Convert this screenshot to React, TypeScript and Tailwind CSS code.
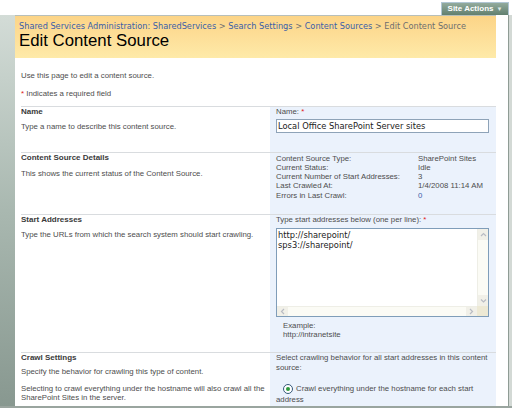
import React from "react"

const sans = "font-['Liberation_Sans',Arial,sans-serif]"
const verdana = "font-['DejaVu_Sans',Verdana,sans-serif]"

function Chevron({ dir }: { dir: "up" | "down" | "left" | "right" }) {
  const pts = {
    up: "2,6 4.5,3.5 7,6",
    down: "2,3.5 4.5,6 7,3.5",
    left: "6,2 3.5,4.5 6,7",
    right: "3,2 5.5,4.5 3,7",
  }[dir]
  return (
    <svg width="9" height="9" viewBox="0 0 9 9">
      <polyline points={pts} fill="none" stroke="#b9bcc4" strokeWidth="1.2" />
    </svg>
  )
}

function FakeTextarea() {
  return (
    <div className="mt-[3px] w-[213px] h-[89px] border border-[#7f9db9] bg-white flex flex-col">
      <div className="flex flex-1">
        <div className={`flex-1 pl-[1px] pt-[1px] text-[8.3px] leading-[10px] text-[#222] ${verdana}`}>
          http://sharepoint/
          <br />
          sps3://sharepoint/
        </div>
        <div className="w-[11px] bg-[#fbfbf5] border-l border-[#eeeee6] flex flex-col justify-between">
          <div className="h-[11px] bg-[#f1f0e8] flex items-center justify-center">
            <Chevron dir="up" />
          </div>
          <div className="h-[11px] bg-[#f1f0e8] flex items-center justify-center">
            <Chevron dir="down" />
          </div>
        </div>
      </div>
      <div className="h-[10px] shrink-0 flex">
        <div className="flex-1 bg-[#fbfbf5] border-t border-[#eeeee6] flex justify-between">
          <div className="w-[11px] bg-[#f1f0e8] flex items-center justify-center">
            <Chevron dir="left" />
          </div>
          <div className="w-[11px] bg-[#f1f0e8] flex items-center justify-center">
            <Chevron dir="right" />
          </div>
        </div>
        <div className="w-[11px] bg-[#ede9d4]" />
      </div>
    </div>
  )
}

function Section({
  title,
  left,
  right,
  height,
}: {
  title: string
  left: React.ReactNode
  right: React.ReactNode
  height: string
}) {
  return (
    <div className={`flex shrink-0 overflow-hidden border-t border-[#d9dcdf] ${height}`}>
      <div className="w-[249px] pr-[2px]">
        <div className="font-bold text-[8px] leading-[10px] text-[#3a3a3a]">{title}</div>
        {left}
      </div>
      <div className="w-[226px] bg-[#ebf2fc] pl-[6px]">{right}</div>
    </div>
  )
}

export default function App() {
  const details = [
    ["Content Source Type:", "SharePoint Sites"],
    ["Current Status:", "Idle"],
    ["Current Number of Start Addresses:", "3"],
    ["Last Crawled At:", "1/4/2008 11:14 AM"],
    ["Errors in Last Crawl:", "0"],
  ]

  return (
    <div className={`w-[512px] h-[408px] overflow-hidden bg-white flex flex-col ${sans}`}>
      {/* top strip */}
      <div className="h-[15px] shrink-0 flex justify-end items-end pr-[3px] bg-white">
        <div className="w-[68px] h-[13px] border border-[#b0c6d4] border-b-0 bg-gradient-to-b from-[#93ab9d] to-[#62806f] flex items-center justify-center gap-[3px]">
          <span className="text-white font-bold text-[8px] leading-[10px]">Site Actions</span>
          <span className="text-[#dfe8e3] text-[6px] leading-[6px]">▼</span>
        </div>
      </div>

      <div className="flex flex-1 min-h-0">
        {/* left rail */}
        <div className="w-[15px] shrink-0 bg-gradient-to-b from-[#d3dcd7] via-[#a9b8b0] to-[#889890]" />

        <div className="flex-1 flex flex-col min-w-0 overflow-hidden">
          {/* title area */}
          <div className="h-[43px] shrink-0 border-t border-[#b7bfba] bg-gradient-to-b from-[#fcd487] to-[#feeaa9] pl-[4px] pt-[5px]">
            <div className={`text-[8.2px] leading-[10px] whitespace-nowrap ${verdana}`}>
              <span className="text-[#3b5ea8]">Shared Services Administration: SharedServices</span>
              <span className="text-[#6e6e6e]"> &gt; </span>
              <span className="text-[#3b5ea8]">Search Settings</span>
              <span className="text-[#6e6e6e]"> &gt; </span>
              <span className="text-[#3b5ea8]">Content Sources</span>
              <span className="text-[#6e6e6e]"> &gt; Edit Content Source</span>
            </div>
            <div className="text-[16.8px] leading-[20px] text-black">Edit Content Source</div>
          </div>

          {/* body */}
          <div className="flex-1 min-h-0 flex flex-col pl-[6px] text-[7.8px] text-[#4d4d4d]">
            <div className="h-[48px] shrink-0 pt-[13px] leading-[10px]">
              <div>Use this page to edit a content source.</div>
              <div className="mt-[8px]">
                <span className="text-[#e02020]">*</span> Indicates a required field
              </div>
            </div>

            <Section
              title="Name"
              height="h-[46px]"
              left={<div className="mt-[5px] leading-[10px]">Type a name to describe this content source.</div>}
              right={
                <div>
                  <div className="leading-[9px]">
                    Name: <span className="text-[#e02020]">*</span>
                  </div>
                  <div
                    className={`mt-[3px] w-[213px] h-[14px] border border-[#8ea3b8] bg-white pl-[1px] text-[8.3px] leading-[12px] text-[#222] whitespace-nowrap ${verdana}`}
                  >
                    Local Office SharePoint Server sites
                  </div>
                </div>
              }
            />

            <Section
              title="Content Source Details"
              height="h-[62px]"
              left={<div className="mt-[6px] leading-[10px]">This shows the current status of the Content Source.</div>}
              right={
                <div className="leading-[9.3px] pt-[0.5px]">
                  {details.map(([k, v]) => (
                    <div key={k} className="flex">
                      <span className="w-[142px]">{k}</span>
                      <span className={v === "0" ? "text-[#3b5ea8]" : ""}>{v}</span>
                    </div>
                  ))}
                </div>
              }
            />

            <Section
              title="Start Addresses"
              height="h-[138px]"
              left={
                <div className="mt-[5px] leading-[10px]">
                  Type the URLs from which the search system should start crawling.
                </div>
              }
              right={
                <div>
                  <div className="leading-[10px]">
                    Type start addresses below (one per line): <span className="text-[#e02020]">*</span>
                  </div>
                  <FakeTextarea />
                  <div className="mt-[4px] pl-[7px] leading-[9.3px]">
                    Example:
                    <br />
                    http://intranetsite
                  </div>
                </div>
              }
            />

            <Section
              title="Crawl Settings"
              height="flex-1"
              left={
                <div className="leading-[10px]">
                  <div className="mt-[4px]">Specify the behavior for crawling this type of content.</div>
                  <div className="mt-[7px] leading-[9.3px] whitespace-nowrap">
                    Selecting to crawl everything under the hostname will also crawl all the
                    <br />
                    SharePoint Sites in the server.
                  </div>
                </div>
              }
              right={
                <div>
                  <div className="leading-[10px] whitespace-nowrap">
                    Select crawling behavior for all start addresses in this content
                    <br />
                    source:
                  </div>
                  <div className="mt-[10px] leading-[11px] whitespace-nowrap">
                    <span className="inline-flex align-middle ml-[7px] mr-[3px] w-[10px] h-[10px] rounded-full border border-[#35597a] bg-white items-center justify-center">
                      <span className="w-[4px] h-[4px] rounded-full bg-[#2e9b3b]" />
                    </span>
                    Crawl everything under the hostname for each start
                    <br />
                    address
                  </div>
                </div>
              }
            />
          </div>
        </div>

        {/* right frame */}
        <div className="w-[12px] shrink-0 bg-white" />
        <div className="w-[4px] shrink-0 border-l border-[#8f9c95] bg-[#d3d9d5]" />
      </div>

      <div className="h-[2px] shrink-0 bg-[#9aa59f]" />
    </div>
  )
}
